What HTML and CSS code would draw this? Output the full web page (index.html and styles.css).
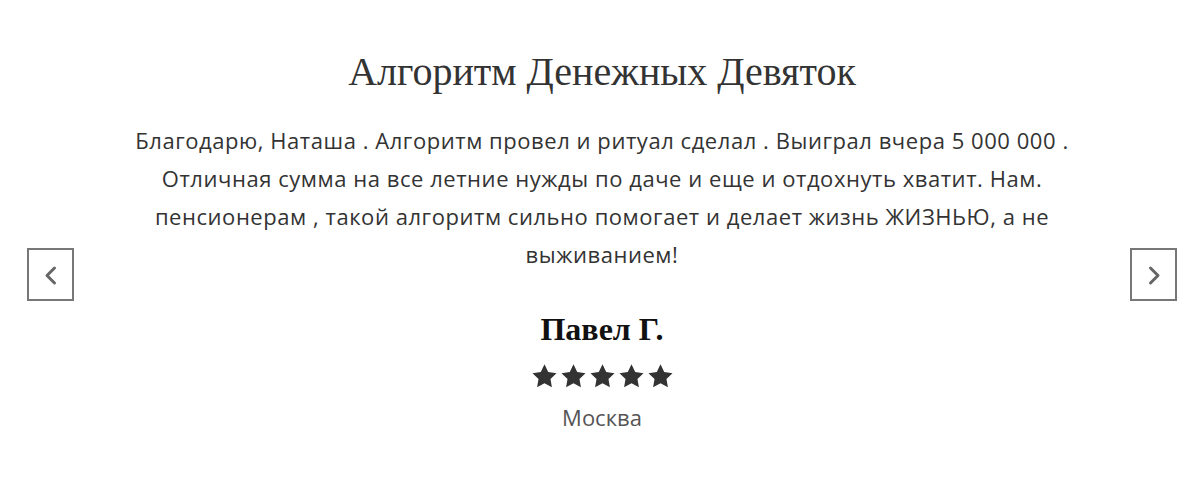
FILE: index.html
```html
<!DOCTYPE html>
<html>

<head>
    <link rel="stylesheet" href="styles.css">
</head>

<body>

    <div class="testimonial-slider">
        <button class="slider-arrow prev">
            <svg viewBox="0 0 24 24" width="24" height="24">
                <polyline points="15.5,5 8,12.5 15.5,20" fill="none" stroke="#666" stroke-width="3" stroke-linecap="round" stroke-linejoin="round"/>
            </svg>
        </button>

        <div class="testimonial">
            <h2 class="testimonial-title">Алгоритм Денежных Девяток</h2>
            <p class="testimonial-text">
                Благодарю, Наташа . Алгоритм провел и ритуал сделал . Выиграл вчера 5 000 000 .
                Отличная сумма на все летние нужды по даче и еще и отдохнуть хватит. Нам.
                пенсионерам , такой алгоритм сильно помогает и делает жизнь ЖИЗНЬЮ, а не выживанием!
            </p>
            <div class="testimonial-name">Павел Г.</div>
            <div class="testimonial-stars">
                <svg viewBox="0 0 24 24"><path d="M12 1.2l3.3 6.7 7.4 1.1-5.4 5.2 1.3 7.3L12 18l-6.6 3.5 1.3-7.3-5.4-5.2 7.4-1.1z"/></svg>
                <svg viewBox="0 0 24 24"><path d="M12 1.2l3.3 6.7 7.4 1.1-5.4 5.2 1.3 7.3L12 18l-6.6 3.5 1.3-7.3-5.4-5.2 7.4-1.1z"/></svg>
                <svg viewBox="0 0 24 24"><path d="M12 1.2l3.3 6.7 7.4 1.1-5.4 5.2 1.3 7.3L12 18l-6.6 3.5 1.3-7.3-5.4-5.2 7.4-1.1z"/></svg>
                <svg viewBox="0 0 24 24"><path d="M12 1.2l3.3 6.7 7.4 1.1-5.4 5.2 1.3 7.3L12 18l-6.6 3.5 1.3-7.3-5.4-5.2 7.4-1.1z"/></svg>
                <svg viewBox="0 0 24 24"><path d="M12 1.2l3.3 6.7 7.4 1.1-5.4 5.2 1.3 7.3L12 18l-6.6 3.5 1.3-7.3-5.4-5.2 7.4-1.1z"/></svg>
            </div>
            <div class="testimonial-city">Москва</div>
        </div>

        <button class="slider-arrow next">
            <svg viewBox="0 0 24 24" width="24" height="24">
                <polyline points="8.5,5 16,12.5 8.5,20" fill="none" stroke="#666" stroke-width="3" stroke-linecap="round" stroke-linejoin="round"/>
            </svg>
        </button>
    </div>

</body>

</html>
```

FILE: styles.css
```css
body {
    margin: 0;
    background-color: #fff;
    font-family: "Open Sans", "Noto Sans", sans-serif;
    color: #333;
}

.testimonial-slider {
    display: flex;
    align-items: flex-start;
    justify-content: space-between;
    padding: 48px 23px 0 27px;
}

.slider-arrow {
    width: 47px;
    height: 53px;
    margin-top: 200px;
    flex-shrink: 0;
    display: flex;
    align-items: center;
    justify-content: center;
    padding: 0;
    border: 2px solid #777;
    background-color: #fff;
    cursor: pointer;
}

.testimonial {
    flex: 1;
    display: flex;
    flex-direction: column;
    align-items: center;
    text-align: center;
    padding: 0 20px;
}

.testimonial-title {
    margin: 0;
    font-family: "Liberation Serif", serif;
    font-weight: normal;
    font-size: 40px;
    line-height: 48px;
    color: #333;
}

.testimonial-text {
    margin: 25px 0 0;
    max-width: 960px;
    font-size: 22px;
    letter-spacing: 0.55px;
    line-height: 38px;
    color: #333;
}

.testimonial-name {
    margin-top: 36px;
    font-family: "Liberation Serif", serif;
    font-weight: bold;
    font-size: 32px;
    line-height: 40px;
    color: #111;
}

.testimonial-stars {
    display: flex;
    gap: 2px;
    margin-top: 14px;
}

.testimonial-stars svg {
    width: 27px;
    height: 27px;
    fill: #333;
}

.testimonial-city {
    margin-top: 12px;
    font-size: 22px;
    line-height: 30px;
    color: #555;
}
```
